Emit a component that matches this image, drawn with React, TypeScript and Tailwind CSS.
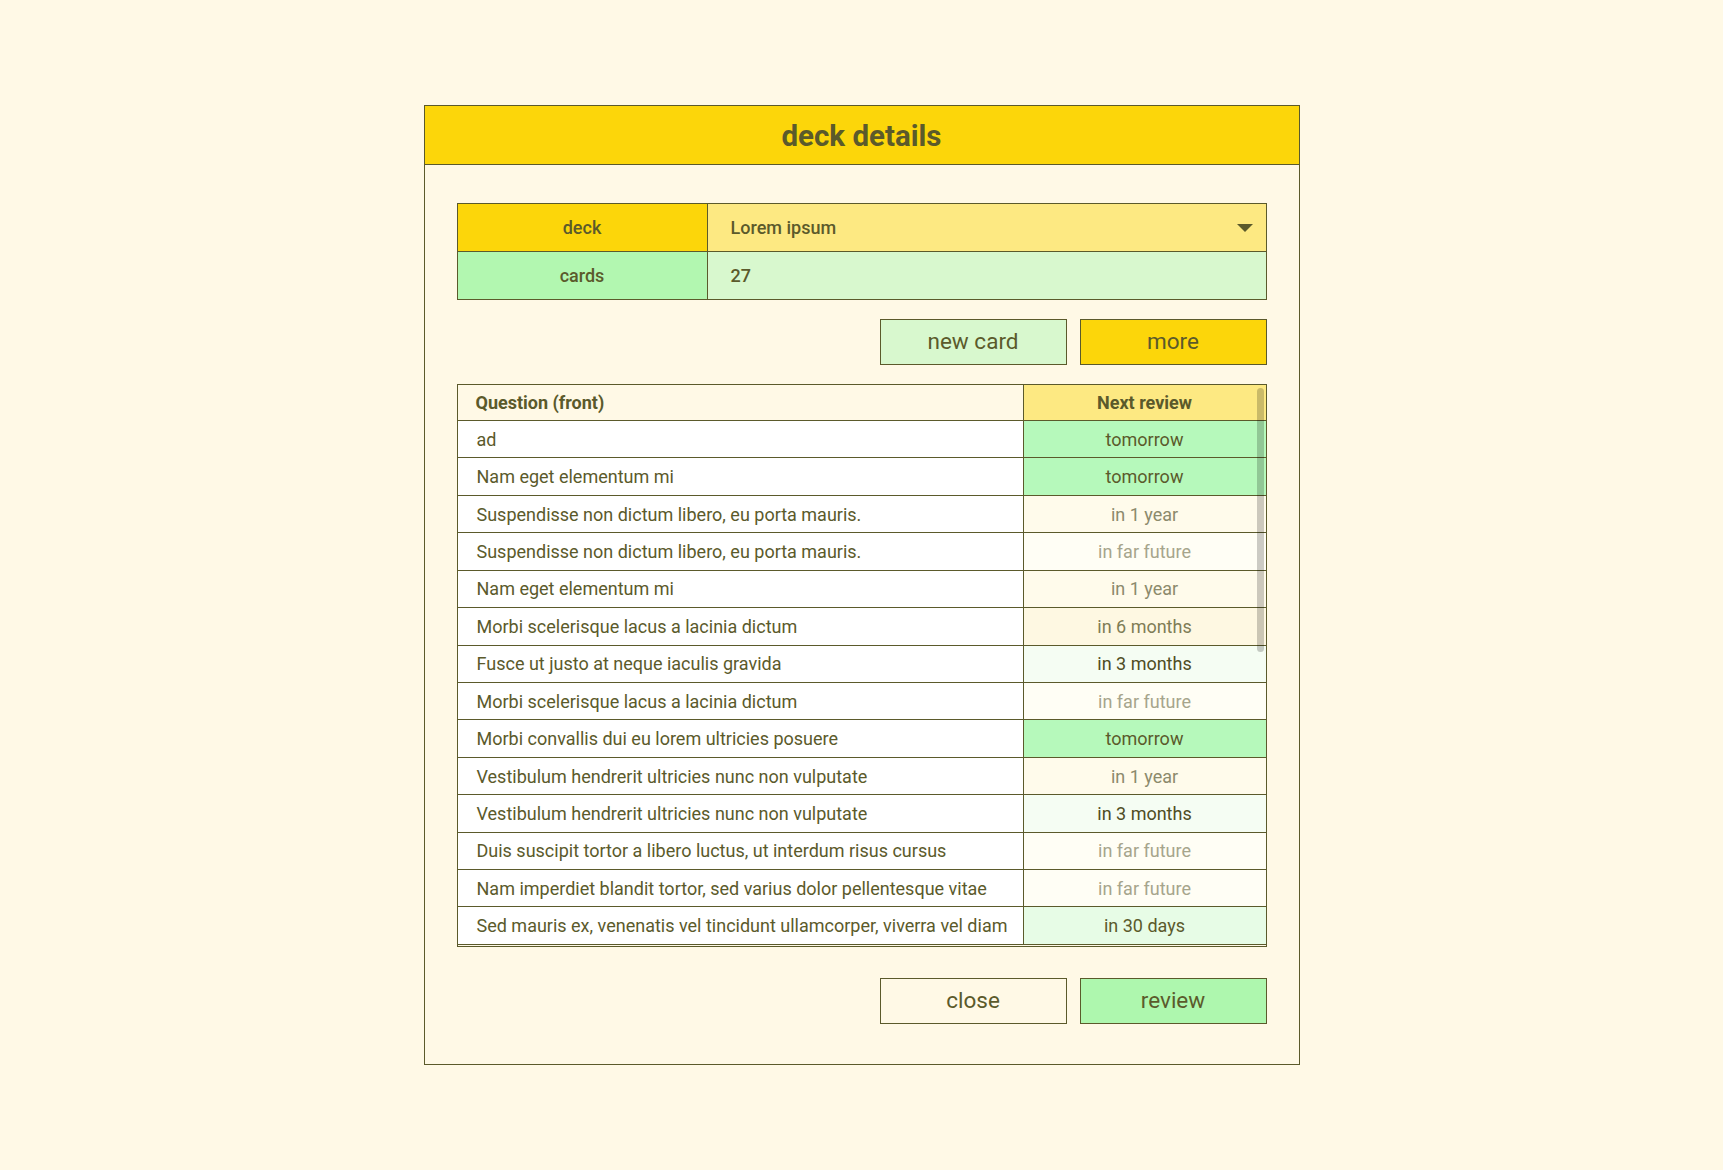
import React from "react";

type Row = { q: string; r: string; kind: "tomorrow" | "year" | "far" | "six" | "three" | "thirty" };

const rows: Row[] = [
  { q: "ad", r: "tomorrow", kind: "tomorrow" },
  { q: "Nam eget elementum mi", r: "tomorrow", kind: "tomorrow" },
  { q: "Suspendisse non dictum libero, eu porta mauris.", r: "in 1 year", kind: "year" },
  { q: "Suspendisse non dictum libero, eu porta mauris.", r: "in far future", kind: "far" },
  { q: "Nam eget elementum mi", r: "in 1 year", kind: "year" },
  { q: "Morbi scelerisque lacus a lacinia dictum", r: "in 6 months", kind: "six" },
  { q: "Fusce ut justo at neque iaculis gravida", r: "in 3 months", kind: "three" },
  { q: "Morbi scelerisque lacus a lacinia dictum", r: "in far future", kind: "far" },
  { q: "Morbi convallis dui eu lorem ultricies posuere", r: "tomorrow", kind: "tomorrow" },
  { q: "Vestibulum hendrerit ultricies nunc non vulputate", r: "in 1 year", kind: "year" },
  { q: "Vestibulum hendrerit ultricies nunc non vulputate", r: "in 3 months", kind: "three" },
  { q: "Duis suscipit tortor a libero luctus, ut interdum risus cursus", r: "in far future", kind: "far" },
  { q: "Nam imperdiet blandit tortor, sed varius dolor pellentesque vitae", r: "in far future", kind: "far" },
  { q: "Sed mauris ex, venenatis vel tincidunt ullamcorper, viverra vel diam", r: "in 30 days", kind: "thirty" },
];

const kindClass: Record<Row["kind"], string> = {
  tomorrow: "bg-[#b6f9bb] text-[#5b5a2b]",
  year: "bg-[#fffbeb] text-[#8c8a6c]",
  far: "bg-[#fffef5] text-[#a6a58c]",
  six: "bg-[#fef8e2] text-[#7f7d56]",
  three: "bg-[#f5fdf3] text-[#4f4d24]",
  thirty: "bg-[#e7fce6] text-[#5b5a2b]",
};

export default function App() {
  return (
    <div
      className="min-h-screen w-full bg-[#fff9e6] flex items-center justify-center text-[#5b5a2b]"
      style={{ fontFamily: "Roboto, 'Noto Sans', sans-serif" }}
    >
      <div className="w-[876px] border border-[#5b5a2b] bg-[#fff9e6] flex flex-col">
        <div className="h-[59px] bg-[#fcd60a] border-b border-[#5b5a2b] flex items-center justify-center pt-[3px]">
          <h1 className="text-[29.5px] font-bold leading-none">deck details</h1>
        </div>
        <div className="px-[32px] pt-[38px] pb-[40px] flex flex-col">
          {/* info table */}
          <div className="border-t border-l border-r border-[#5b5a2b] flex flex-col">
            <div className="flex h-[48px] border-b border-[#5b5a2b]">
              <div className="w-[250px] bg-[#fcd60a] border-r border-[#5b5a2b] flex items-center justify-center text-[18px] font-medium">
                deck
              </div>
              <div className="flex-1 bg-[#fde982] flex items-center justify-between pl-[23px] pr-[13px] text-[18px] font-medium">
                <span>Lorem ipsum</span>
                <svg width="16" height="8" viewBox="0 0 16 8">
                  <polygon points="0,0 16,0 8,8" fill="#5b5a2b" />
                </svg>
              </div>
            </div>
            <div className="flex h-[48px] border-b border-[#5b5a2b]">
              <div className="w-[250px] bg-[#b2f7b0] border-r border-[#5b5a2b] flex items-center justify-center text-[18px] font-medium">
                cards
              </div>
              <div className="flex-1 bg-[#d8f8ce] flex items-center pl-[23px] text-[18px] font-medium">27</div>
            </div>
          </div>

          {/* action buttons */}
          <div className="flex justify-end gap-[13px] mt-[19px]">
            <button className="w-[187px] h-[46px] border border-[#5b5a2b] bg-[#d8f8ce] text-[22.5px]">new card</button>
            <button className="w-[187px] h-[46px] border border-[#5b5a2b] bg-[#fcd60a] text-[22.5px]">more</button>
          </div>

          {/* cards table */}
          <div className="relative mt-[19px] h-[563px] border border-[#5b5a2b] overflow-hidden">
            <div className="flex flex-col">
              <div className="flex h-[36px] border-b border-[#5b5a2b] text-[18px] font-bold">
                <div className="w-[566px] border-r border-[#5b5a2b] bg-[#fff9e6] flex items-center pl-[18px]">
                  Question (front)
                </div>
                <div className="flex-1 bg-[#fde982] flex items-center justify-center">Next review</div>
              </div>
              {rows.map((row, i) => (
                <div key={i} className="flex h-[37.43px] shrink-0 border-b border-[#5b5a2b] text-[18px]">
                  <div className="w-[566px] border-r border-[#5b5a2b] bg-white flex items-center pl-[19px] whitespace-nowrap">
                    {row.q}
                  </div>
                  <div className={"flex-1 flex items-center justify-center " + kindClass[row.kind]}>{row.r}</div>
                </div>
              ))}
            </div>
            <div className="absolute top-[3px] right-[2px] w-[7px] h-[264px] rounded-full bg-black/20" />
          </div>

          {/* bottom buttons */}
          <div className="flex justify-end gap-[13px] mt-[31px]">
            <button className="w-[187px] h-[46px] border border-[#5b5a2b] bg-transparent text-[22.5px]">close</button>
            <button className="w-[187px] h-[46px] border border-[#5b5a2b] bg-[#aef7ae] text-[22.5px]">review</button>
          </div>
        </div>
      </div>
    </div>
  );
}
